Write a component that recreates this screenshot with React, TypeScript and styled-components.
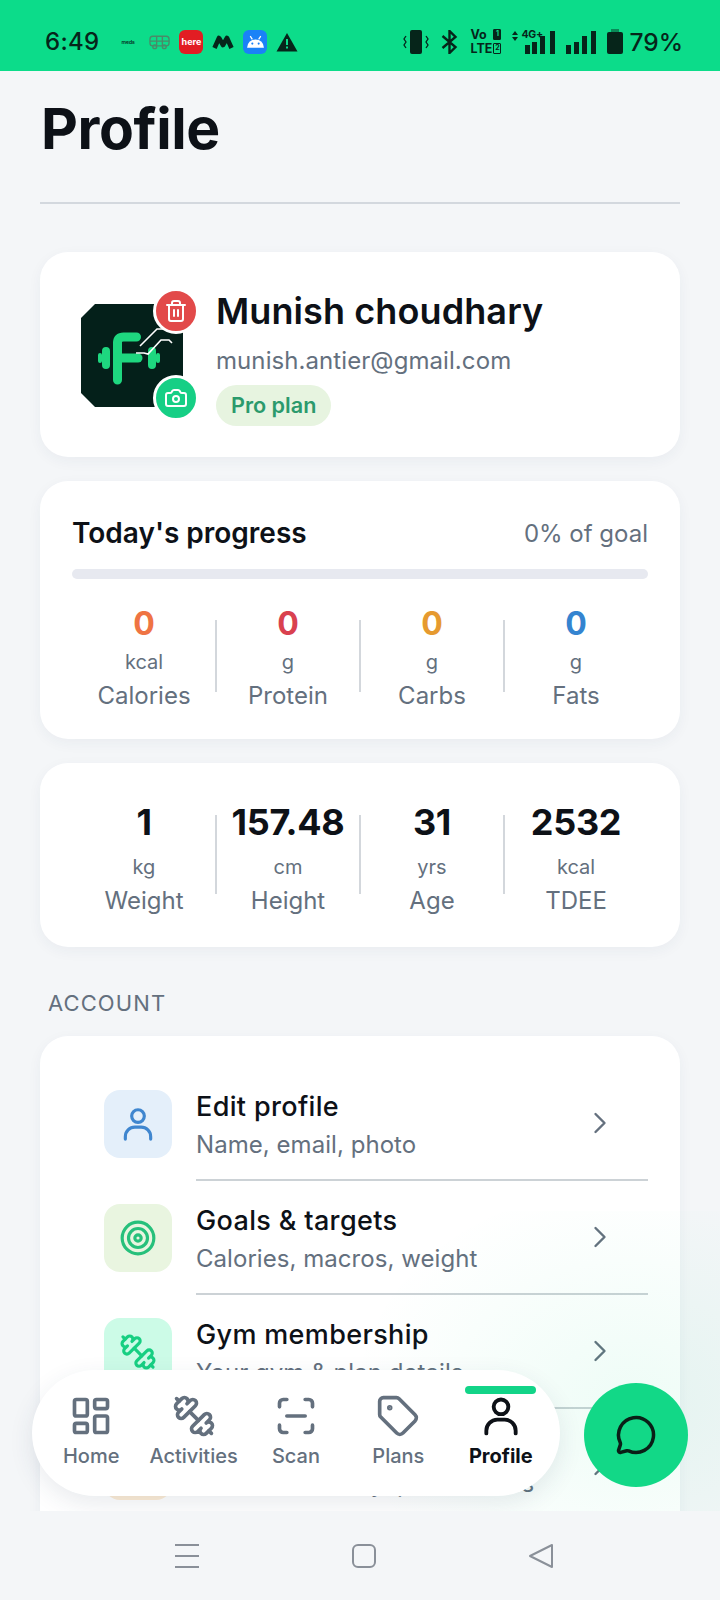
import React from "react";
import styled, { createGlobalStyle } from "styled-components";
import { Camera, ChevronRight, Dumbbell, LayoutDashboard, MessageCircle, ScanLine, Tag, Target, Trash2 } from "lucide-react";

const Global = createGlobalStyle`
  * { box-sizing: border-box; }
  html, body { margin: 0; padding: 0; background: #f4f6f8; }
  body { font-family: Inter, "Liberation Sans", sans-serif; }
`;
const Page = styled.div`width: 720px; height: 1600px; display: flex; flex-direction: column; overflow: hidden; background: #f4f6f8;`;
const StatusBar = styled.div`height: 71px; flex: none; background: #0cdc8a; display: flex; align-items: center; justify-content: space-between; padding: 12px 37px 0 45px; color: #06251a;`;
const StatusGroup = styled.div<{ $gap?: number }>`display: flex; align-items: center; gap: ${p => p.$gap ?? 9}px;`;
const Clock = styled.span`font-size: 24px; font-weight: 500; margin-right: 13px; letter-spacing: .3px;`;
const Tiny = styled.span`font-size: 5px; font-weight: 600; width: 14px; margin-right: 5px;`;
const AppTile = styled.div<{ $bg: string }>`width: 24px; height: 24px; border-radius: 6px; background: ${p => p.$bg}; color: #fff; display: flex; align-items: center; justify-content: center; font-size: 9px; font-weight: 700;`;
const Net = styled.div`display: flex; flex-direction: column; gap: 3px; font-size: 12.5px; line-height: 11px; font-weight: 700; width: 31px;`;
const NetRow = styled.div`display: flex; justify-content: space-between; align-items: center;`;
const Sim = styled.span<{ $filled?: boolean }>`width: 8px; height: 11px; border: 1.5px solid #06251a; border-radius: 1px; background: ${p => p.$filled ? "#06251a" : "transparent"}; color: ${p => p.$filled ? "#0cdc8a" : "#06251a"}; font-size: 7px; line-height: 8px; text-align: center; font-weight: 700;`;
const Battery = styled.span`font-size: 24.5px; font-weight: 500;`;
const GPlus = styled.span`position: absolute; left: 9px; top: -2px; font-size: 10.5px; font-weight: 700; letter-spacing: -.2px;`;
const SignalWrap = styled.div`position: relative; display: flex;`;

const Content = styled.div`position: relative; flex: 1; min-height: 0; overflow: hidden; padding: 0 40px;`;
const Title = styled.h1`margin: 24px 0 0 0; padding-left: 1px; font-size: 57px; line-height: 68px; font-weight: 700; color: #0d1117; letter-spacing: -.4px; height: 109px; border-bottom: 2px solid #d3d8de;`;
const Card = styled.section<{ $mt?: number; $h?: number }>`background: #fff; border-radius: 28px; margin-top: ${p => p.$mt ?? 24}px; box-shadow: 0 4px 14px rgba(40, 60, 90, .05); ${p => p.$h ? `height: ${p.$h}px;` : ""}`;
const ProfileCard = styled(Card)`display: flex; align-items: flex-start; padding: 37px 32px 0 41px;`;
const AvatarWrap = styled.div`position: relative; width: 102px; height: 103px; margin-top: 15px; flex: none;`;
const AvatarBadge = styled.div<{ $bg: string; $top: number }>`position: absolute; left: 72px; top: ${p => p.$top}px; width: 46px; height: 46px; border-radius: 50%; background: ${p => p.$bg}; border: 3px solid #fff; color: #fff; display: flex; align-items: center; justify-content: center;`;
const ProfileText = styled.div`margin-left: 33px; display: flex; flex-direction: column; align-items: flex-start;`;
const Name = styled.div`font-size: 36px; line-height: 44px; font-weight: 600; color: #0d1117; letter-spacing: .1px;`;
const Email = styled.div`font-size: 24px; line-height: 30px; color: #64707e; margin-top: 13px; letter-spacing: .08px;`;
const Pill = styled.div`margin-top: 9px; height: 41px; padding: 0 15px; border-radius: 21px; background: #e7f4e0; color: #2b9a6c; font-size: 21.6px; line-height: 41px; font-weight: 600;`;
const ProgressCard = styled(Card)`padding: 34px 32px 0;`;
const ProgressHead = styled.div`display: flex; justify-content: space-between; align-items: center; height: 36px;`;
const ProgressTitle = styled.div`font-size: 28px; font-weight: 600; color: #0d1117;`;
const ProgressNote = styled.div`font-size: 24px; color: #64707e;`;
const Track = styled.div`height: 10px; border-radius: 5px; background: #e7e9f0; margin-top: 18px;`;
const StatGrid = styled.div`display: grid; grid-template-columns: repeat(4, 144px); margin-top: 27px;`;
const BodyGrid = styled(StatGrid)`margin-top: 0; padding: 34px 32px 0;`;
const Stat = styled.div<{ $divider: boolean; $top: number; $bottom: number }>`position: relative; text-align: center; ${p => p.$divider ? `&::after { content: ""; position: absolute; right: -1px; top: ${p.$top}px; bottom: ${p.$bottom}px; width: 2px; background: #d3d7dc; }` : ""}`;
const MacroValue = styled.div<{ $c: string }>`font-size: 32px; line-height: 36px; font-weight: 700; color: ${p => p.$c};`;
const BodyValue = styled.div`font-size: 36px; line-height: 50px; font-weight: 700; color: #0d1117; letter-spacing: -.3px;`;
const Unit = styled.div`font-size: 20px; line-height: 28px; color: #64707e; margin-top: 6px;`;
const StatName = styled.div`font-size: 24px; line-height: 34px; color: #64707e; margin-top: 3px;`;
const SectionLabel = styled.div`font-size: 22px; line-height: 28px; color: #64707e; letter-spacing: 1.1px; margin: 42px 0 0 8px;`;
const MenuCard = styled(Card)`padding: 31px 32px 0 64px; margin-top: 19px; height: 600px;`;
const Row = styled.div`display: flex; align-items: center; height: 114px;`;
const IconBox = styled.div<{ $bg: string; $c: string }>`width: 68px; height: 68px; border-radius: 16px; background: ${p => p.$bg}; color: ${p => p.$c}; display: flex; align-items: center; justify-content: center; flex: none;`;
const RowBody = styled.div<{ $line: boolean }>`margin-left: 24px; flex: 1; align-self: stretch; display: flex; align-items: center; justify-content: space-between; padding-right: 30px; border-bottom: 2px solid ${p => p.$line ? "#ccd2d6" : "transparent"};`;
const RowText = styled.div<{ $lift: boolean }>`${p => p.$lift ? "padding-bottom: 3px;" : "padding-top: 4px;"}`;
const RowTitle = styled.div`font-size: 27px; line-height: 36px; font-weight: 500; color: #0d1117; letter-spacing: .35px;`;
const RowSub = styled.div`font-size: 24px; line-height: 32px; color: #64707e; margin-top: 4px; letter-spacing: .05px; white-space: nowrap;`;
const Chevron = styled.div`color: #64707e; display: flex;`;
const Glow = styled.div`position: absolute; left: 0; right: 0; bottom: 0; height: 300px; background: radial-gradient(ellipse 280px 220px at 630px 190px, rgba(18, 216, 135, .07), rgba(18, 216, 135, 0)); pointer-events: none;`;
const BottomNav = styled.nav`position: absolute; left: 32px; top: 1299px; width: 528px; height: 126px; border-radius: 63px; background: #fff; box-shadow: 0 8px 24px rgba(40, 60, 90, .1); display: grid; grid-template-columns: repeat(5, 102.4px); padding: 0 8px;`;
const NavItem = styled.div<{ $active?: boolean }>`position: relative; display: flex; flex-direction: column; align-items: center; padding-top: 24px; color: ${p => p.$active ? "#0d1117" : "#64707e"}; font-weight: ${p => p.$active ? 700 : 500};`;
const NavLabel = styled.span`font-size: 20px; line-height: 24px; margin-top: 6px; white-space: nowrap;`;
const ActiveBar = styled.div`position: absolute; top: 16px; left: 15px; width: 71px; height: 8px; border-radius: 4px; background: #12d488;`;
const Fab = styled.div`position: absolute; left: 584px; top: 1312px; width: 104px; height: 104px; border-radius: 50%; background: #12d887; color: #0a1f17; display: flex; align-items: center; justify-content: center;`;
const SystemNav = styled.div`height: 89px; flex: none; background: #f4f6f8; display: flex; justify-content: center; align-items: flex-start; padding: 32px 0 0 8px; gap: 151px; color: #8a9099;`;
const FlippedDumbbell = styled(Dumbbell)`transform: scaleX(-1);`;

const UserIcon = ({ size, sw }: { size: number; sw: number }) => (
  <svg width={size} height={size} viewBox="0 0 24 24" fill="none" stroke="currentColor" strokeWidth={sw} strokeLinecap="round">
    <circle cx="12" cy="7" r="4" />
    <path d="M4 21.5V20a6 6 0 0 1 6-6h4a6 6 0 0 1 6 6v1.5" />
  </svg>
);

const StatusIcons = () => (
  <StatusBar>
    <StatusGroup>
      <Clock>6:49</Clock>
      <Tiny>meds</Tiny>
      <svg width="21" height="16" viewBox="0 0 22 16" fill="none" stroke="#4a8a68" strokeWidth="1.4"><rect x="1" y="2" width="20" height="10" rx="3"/><circle cx="6" cy="13" r="2"/><circle cx="16" cy="13" r="2"/><path d="M1 7h20M8 2v10M14 2v10"/></svg>
      <AppTile $bg="#e21d23">here</AppTile>
      <svg width="22" height="16" viewBox="0 0 22 16" fill="none" stroke="#06251a" strokeWidth="4.6" strokeLinejoin="round"><path d="M2.5 14 7 4l4 7 4-7 4.500 10"/></svg>
      <AppTile $bg="#1a82f7">
        <svg width="19" height="13" viewBox="0 0 18 12" fill="#fff"><path d="M1 12a8 8 0 0 1 16 0z"/><path d="M4 1l2 3M14 1l-2 3" stroke="#fff" strokeWidth="1.2"/><circle cx="6" cy="8" r="1" fill="#1a82f7"/><circle cx="12" cy="8" r="1" fill="#1a82f7"/></svg>
      </AppTile>
      <svg width="22" height="20" viewBox="0 0 22 20"><path d="M11 1 21.500 19.500H.5z" fill="#06251a"/><path d="M10 7h2v6h-2zM10 14.500h2v2h-2z" fill="#0cdc8a"/></svg>
    </StatusGroup>
    <StatusGroup $gap={11}>
      <svg width="26" height="24" viewBox="0 0 26 24" fill="#06251a"><rect x="7" y="0" width="12" height="24" rx="2"/><path d="M3 6l-2 3 2 3-2 3 2 3M23 6l2 3-2 3 2 3-2 3" fill="none" stroke="#06251a" strokeWidth="1.3"/></svg>
      <svg width="19" height="24" viewBox="-1 0 18 24" fill="none" stroke="#06251a" strokeWidth="2.4"><path d="M1 6l13 11-6 6V1l6 6L1 18"/></svg>
      <Net>
        <NetRow><span>Vo</span><Sim $filled>1</Sim></NetRow>
        <NetRow><span>LTE</span><Sim>2</Sim></NetRow>
      </Net>
      <SignalWrap>
        <svg width="43" height="24" viewBox="0 0 43 24" fill="#06251a"><path d="M3 1l3 4H0zM3 11l3-4H0z"/><rect x="13" y="15" width="5" height="9"/><rect x="20" y="12" width="5" height="12"/><rect x="28" y="6" width="5" height="18"/><rect x="38" y="1" width="5" height="23"/></svg>
        <GPlus>4G+</GPlus>
      </SignalWrap>
      <svg width="30" height="24" viewBox="0 0 30 24" fill="#06251a"><rect y="15" width="5" height="9"/><rect x="8" y="12" width="5" height="12"/><rect x="16" y="6" width="5" height="18"/><rect x="25" y="1" width="5" height="23"/></svg>
      <StatusGroup $gap={6}>
        <svg width="16" height="25" viewBox="0 0 16 25" fill="#06251a"><rect x="0" y="3" width="16" height="22" rx="2"/><rect x="4" y="0" width="8" height="3" opacity=".45"/></svg>
        <Battery>79%</Battery>
      </StatusGroup>
    </StatusGroup>
  </StatusBar>
);

const Avatar = () => (
  <svg width="102" height="103" viewBox="0 0 102 103">
    <path d="M14 0h88v103H14L0 89V14z" fill="#04201a"/>
    <g fill="none" stroke="#1ed77f" strokeLinecap="round">
      <path d="M36.500 76V39q0-6 6-6h13" strokeWidth="9"/>
      <path d="M37 54h20" strokeWidth="9"/>
      <path d="M25 47v14M71 47v14" strokeWidth="8"/>
      <path d="M19 51v6M77 51v6" strokeWidth="4"/>
    </g>
    <path d="M59 42 76 25h8M55 49h8l4 1 13-14h8l3 3" fill="none" stroke="#fff" strokeWidth="1.6"/>
  </svg>
);

const macros: [string, string, string][] = [["#ef7443", "kcal", "Calories"], ["#d9414f", "g", "Protein"], ["#e69a2f", "g", "Carbs"], ["#3484d0", "g", "Fats"]];
const body: [string, string, string][] = [["1", "kg", "Weight"], ["157.48", "cm", "Height"], ["31", "yrs", "Age"], ["2532", "kcal", "TDEE"]];
const menu = [
  { t: "Edit profile", s: "Name, email, photo", bg: "#e4effa", c: "#3f86cf", i: <UserIcon size={38} sw={2} /> },
  { t: "Goals & targets", s: "Calories, macros, weight", bg: "#e9f5e0", c: "#26c07b", i: <Target size={38} strokeWidth={2} /> },
  { t: "Gym membership", s: "Your gym & plan details", bg: "#ccfbe7", c: "#17cf82", i: <FlippedDumbbell size={38} strokeWidth={2} /> },
  { t: "Notifications", s: "Reminders, daily, preferences", bg: "#fdecd5", c: "#e69a2f", i: <Target size={38} strokeWidth={2} /> },
];
const nav = [
  { l: "Home", i: <LayoutDashboard size={44} strokeWidth={2} /> },
  { l: "Activities", i: <FlippedDumbbell size={44} strokeWidth={2} /> },
  { l: "Scan", i: <ScanLine size={44} strokeWidth={2} /> },
  { l: "Plans", i: <Tag size={44} strokeWidth={2} /> },
  { l: "Profile", a: true, i: <UserIcon size={44} sw={2.1} /> },
];

export default function App() {
  return (
    <Page>
      <Global />
      <StatusIcons />
      <Content>
        <Title>Profile</Title>
        <ProfileCard $mt={48} $h={205}>
          <AvatarWrap>
            <Avatar />
            <AvatarBadge $bg="#e24a4a" $top={-16}><Trash2 size={24} strokeWidth={2} /></AvatarBadge>
            <AvatarBadge $bg="#16cf85" $top={71}><Camera size={24} strokeWidth={2} /></AvatarBadge>
          </AvatarWrap>
          <ProfileText>
            <Name>Munish choudhary</Name>
            <Email>munish.antier@gmail.com</Email>
            <Pill>Pro plan</Pill>
          </ProfileText>
        </ProfileCard>
        <ProgressCard $h={258}>
          <ProgressHead><ProgressTitle>Today's progress</ProgressTitle><ProgressNote>0% of goal</ProgressNote></ProgressHead>
          <Track />
          <StatGrid>
            {macros.map(([c, u, n], i) => (
              <Stat key={n} $divider={i < 3} $top={14} $bottom={21}>
                <MacroValue $c={c}>0</MacroValue>
                <Unit>{u}</Unit>
                <StatName>{n}</StatName>
              </Stat>
            ))}
          </StatGrid>
        </ProgressCard>
        <Card $h={184}>
          <BodyGrid>
            {body.map(([v, u, n], i) => (
              <Stat key={n} $divider={i < 3} $top={18} $bottom={24}>
                <BodyValue>{v}</BodyValue>
                <Unit>{u}</Unit>
                <StatName>{n}</StatName>
              </Stat>
            ))}
          </BodyGrid>
        </Card>
        <SectionLabel>ACCOUNT</SectionLabel>
        <MenuCard>
          {menu.map((m, i) => (
            <Row key={m.t}>
              <IconBox $bg={m.bg} $c={m.c}>{m.i}</IconBox>
              <RowBody $line={i < 3}>
                <RowText $lift={i === 3}><RowTitle>{m.t}</RowTitle><RowSub>{m.s}</RowSub></RowText>
                <Chevron><ChevronRight size={36} strokeWidth={1.6} /></Chevron>
              </RowBody>
            </Row>
          ))}
        </MenuCard>
        <Glow />
        <BottomNav>
          {nav.map(n => (
            <NavItem key={n.l} $active={n.a}>
              {n.a && <ActiveBar />}
              {n.i}
              <NavLabel>{n.l}</NavLabel>
            </NavItem>
          ))}
        </BottomNav>
        <Fab><MessageCircle size={42} strokeWidth={2} /></Fab>
      </Content>
      <SystemNav>
        <svg width="26" height="26" viewBox="0 0 26 26" fill="none" stroke="currentColor" strokeWidth="2"><path d="M1 2h24M1 13h24M1 24h24"/></svg>
        <svg width="26" height="26" viewBox="0 0 26 26" fill="none" stroke="currentColor" strokeWidth="2"><rect x="2" y="2" width="22" height="22" rx="5"/></svg>
        <svg width="26" height="26" viewBox="0 0 26 26" fill="none" stroke="currentColor" strokeWidth="2" strokeLinejoin="round"><path d="M24 2v22L2 13z"/></svg>
      </SystemNav>
    </Page>
  );
}
